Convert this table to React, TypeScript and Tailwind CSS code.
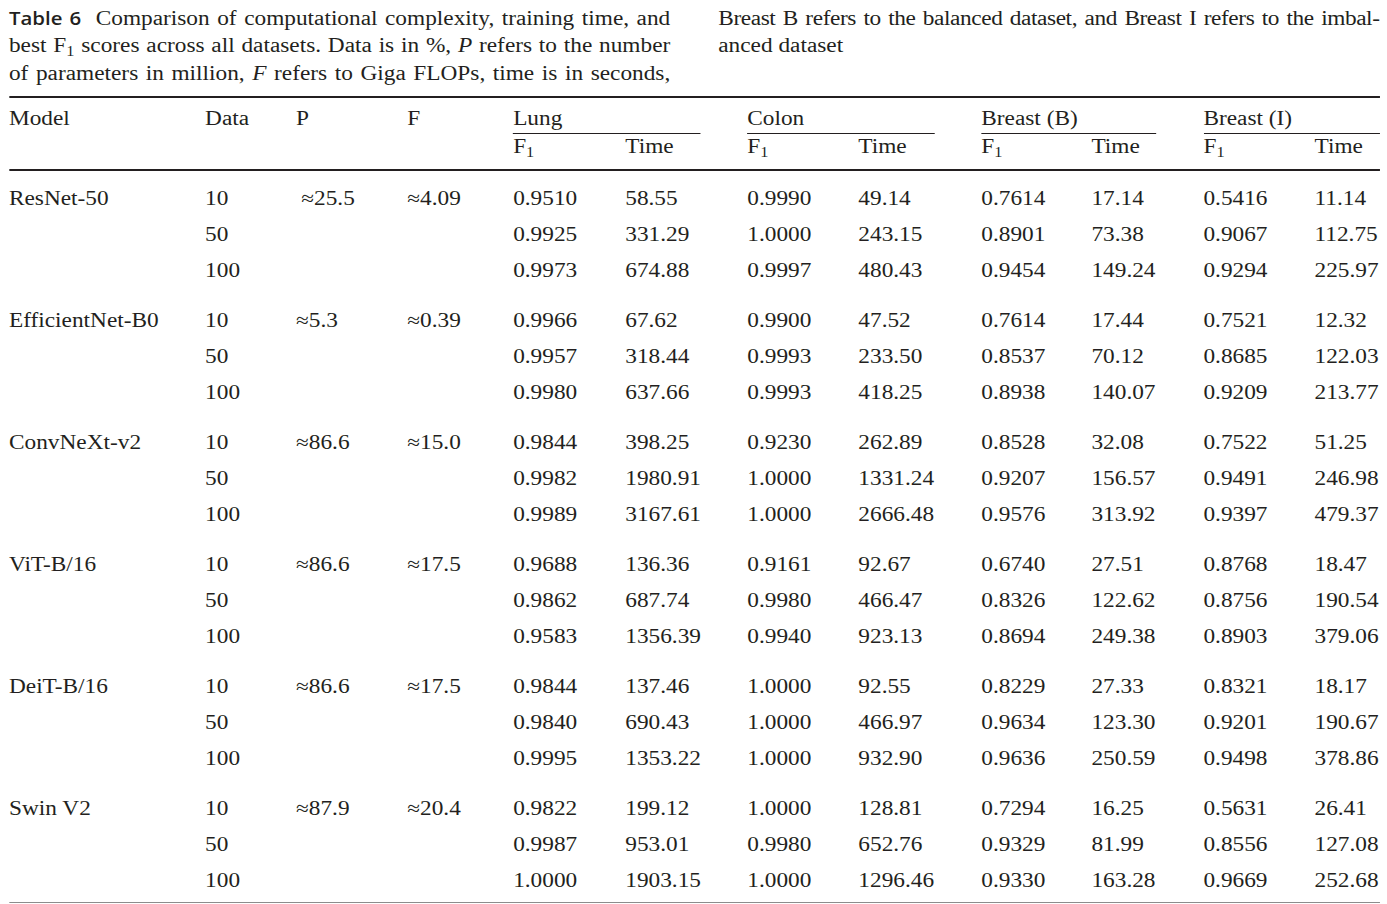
import React from "react";

type Group = {
  model: string;
  p: string;
  f: string;
  pIndent?: boolean;
  rows: [string, string[]][];
};

const groups: Group[] = [
  {
    model: "ResNet-50",
    p: "≈25.5",
    f: "≈4.09",
    pIndent: true,
    rows: [
      ["10", ["0.9510", "58.55", "0.9990", "49.14", "0.7614", "17.14", "0.5416", "11.14"]],
      ["50", ["0.9925", "331.29", "1.0000", "243.15", "0.8901", "73.38", "0.9067", "112.75"]],
      ["100", ["0.9973", "674.88", "0.9997", "480.43", "0.9454", "149.24", "0.9294", "225.97"]],
    ],
  },
  {
    model: "EfficientNet-B0",
    p: "≈5.3",
    f: "≈0.39",
    rows: [
      ["10", ["0.9966", "67.62", "0.9900", "47.52", "0.7614", "17.44", "0.7521", "12.32"]],
      ["50", ["0.9957", "318.44", "0.9993", "233.50", "0.8537", "70.12", "0.8685", "122.03"]],
      ["100", ["0.9980", "637.66", "0.9993", "418.25", "0.8938", "140.07", "0.9209", "213.77"]],
    ],
  },
  {
    model: "ConvNeXt-v2",
    p: "≈86.6",
    f: "≈15.0",
    rows: [
      ["10", ["0.9844", "398.25", "0.9230", "262.89", "0.8528", "32.08", "0.7522", "51.25"]],
      ["50", ["0.9982", "1980.91", "1.0000", "1331.24", "0.9207", "156.57", "0.9491", "246.98"]],
      ["100", ["0.9989", "3167.61", "1.0000", "2666.48", "0.9576", "313.92", "0.9397", "479.37"]],
    ],
  },
  {
    model: "ViT-B/16",
    p: "≈86.6",
    f: "≈17.5",
    rows: [
      ["10", ["0.9688", "136.36", "0.9161", "92.67", "0.6740", "27.51", "0.8768", "18.47"]],
      ["50", ["0.9862", "687.74", "0.9980", "466.47", "0.8326", "122.62", "0.8756", "190.54"]],
      ["100", ["0.9583", "1356.39", "0.9940", "923.13", "0.8694", "249.38", "0.8903", "379.06"]],
    ],
  },
  {
    model: "DeiT-B/16",
    p: "≈86.6",
    f: "≈17.5",
    rows: [
      ["10", ["0.9844", "137.46", "1.0000", "92.55", "0.8229", "27.33", "0.8321", "18.17"]],
      ["50", ["0.9840", "690.43", "1.0000", "466.97", "0.9634", "123.30", "0.9201", "190.67"]],
      ["100", ["0.9995", "1353.22", "1.0000", "932.90", "0.9636", "250.59", "0.9498", "378.86"]],
    ],
  },
  {
    model: "Swin V2",
    p: "≈87.9",
    f: "≈20.4",
    rows: [
      ["10", ["0.9822", "199.12", "1.0000", "128.81", "0.7294", "16.25", "0.5631", "26.41"]],
      ["50", ["0.9987", "953.01", "0.9980", "652.76", "0.9329", "81.99", "0.8556", "127.08"]],
      ["100", ["1.0000", "1903.15", "1.0000", "1296.46", "0.9330", "163.28", "0.9669", "252.68"]],
    ],
  },
];

const GRID =
  "grid grid-cols-[168.3px_78px_95.4px_90.9px_96.2px_104.7px_95.3px_105.5px_94.5px_96.1px_95.3px_55.8px]";

function F1() {
  return (
    <span>
      F<sub className="text-[14px]">1</sub>
    </span>
  );
}

const groupHeads: [string, string][] = [
  ["Lung", "w-[160.6px]"],
  ["Colon", "w-[160.5px]"],
  ["Breast (B)", "w-[150.3px]"],
  ["Breast (I)", "w-[151.1px]"],
];

export default function App() {
  return (
    <div className="w-full h-[904px] overflow-hidden bg-white">
      <div
        className="w-[1190px] origin-top-left scale-x-[1.1655] text-[#231f20] text-[20px]"
        style={{ fontFamily: '"Liberation Serif", "Times New Roman", serif' }}
      >
        {/* Caption */}
        <div className="pt-[4.5px] ml-[7.7px] w-[1176px] flex gap-[41.2px] leading-[27.5px] h-[87px]">
          <div className="w-[567.4px]">
            <div className="text-justify [text-align-last:justify]">
              <span
                className="font-semibold text-[17.5px] mr-[6px]"
                style={{ fontFamily: '"Open Sans", "Liberation Sans", sans-serif' }}
              >
                Table 6
              </span>{" "}
              Comparison of computational complexity, training time, and
            </div>
            <div className="text-justify [text-align-last:justify]">
              best <F1 /> scores across all datasets. Data is in %, <i>P</i> refers to the number
            </div>
            <div className="text-justify [text-align-last:justify]">
              of parameters in million, <i>F</i> refers to Giga FLOPs, time is in seconds,
            </div>
          </div>
          <div className="w-[567.4px]">
            <div className="whitespace-nowrap tracking-[-0.35px] text-justify [text-align-last:justify]">
              Breast B refers to the balanced dataset, and Breast I refers to the imbal-
            </div>
            <div>anced dataset</div>
          </div>
        </div>

        {/* Table */}
        <div className="ml-[7.7px] w-[1176px] mt-[9px]">
          <div className="h-[2px] bg-[#231f20]" />
          {/* header row 1 */}
          <div className={`${GRID} pt-[8px] pb-[3px] leading-[24px]`}>
            <div>Model</div>
            <div>Data</div>
            <div>P</div>
            <div>F</div>
            {groupHeads.map(([label, w]) => (
              <div key={label} className="col-span-2 relative">
                <div>{label}</div>
                <div className={`absolute left-0 -bottom-[4px] h-px bg-[#231f20] ${w}`} />
              </div>
            ))}
          </div>
          {/* header row 2 */}
          <div className={`${GRID} pt-[1px] pb-[11px] leading-[24px]`}>
            <div />
            <div />
            <div />
            <div />
            {groupHeads.map(([label]) => (
              <React.Fragment key={label}>
                <div>
                  <F1 />
                </div>
                <div>Time</div>
              </React.Fragment>
            ))}
          </div>
          <div className="h-[2px] bg-[#231f20]" />

          {/* body */}
          <div className="pt-[9px] pb-[4px] flex flex-col gap-[14px]">
            {groups.map((g) => (
              <div key={g.model} className="flex flex-col">
                {g.rows.map(([d, vals], i) => (
                  <div key={d} className={`${GRID} h-[36px] leading-[36px]`}>
                    <div>{i === 0 ? g.model : ""}</div>
                    <div>{d}</div>
                    <div className={g.pIndent ? "pl-[4.5px]" : ""}>{i === 0 ? g.p : ""}</div>
                    <div>{i === 0 ? g.f : ""}</div>
                    {vals.map((v, k) => (
                      <div key={k}>{v}</div>
                    ))}
                  </div>
                ))}
              </div>
            ))}
          </div>
          <div className="h-px bg-[#8c8c8c]" />
        </div>
      </div>
    </div>
  );
}
